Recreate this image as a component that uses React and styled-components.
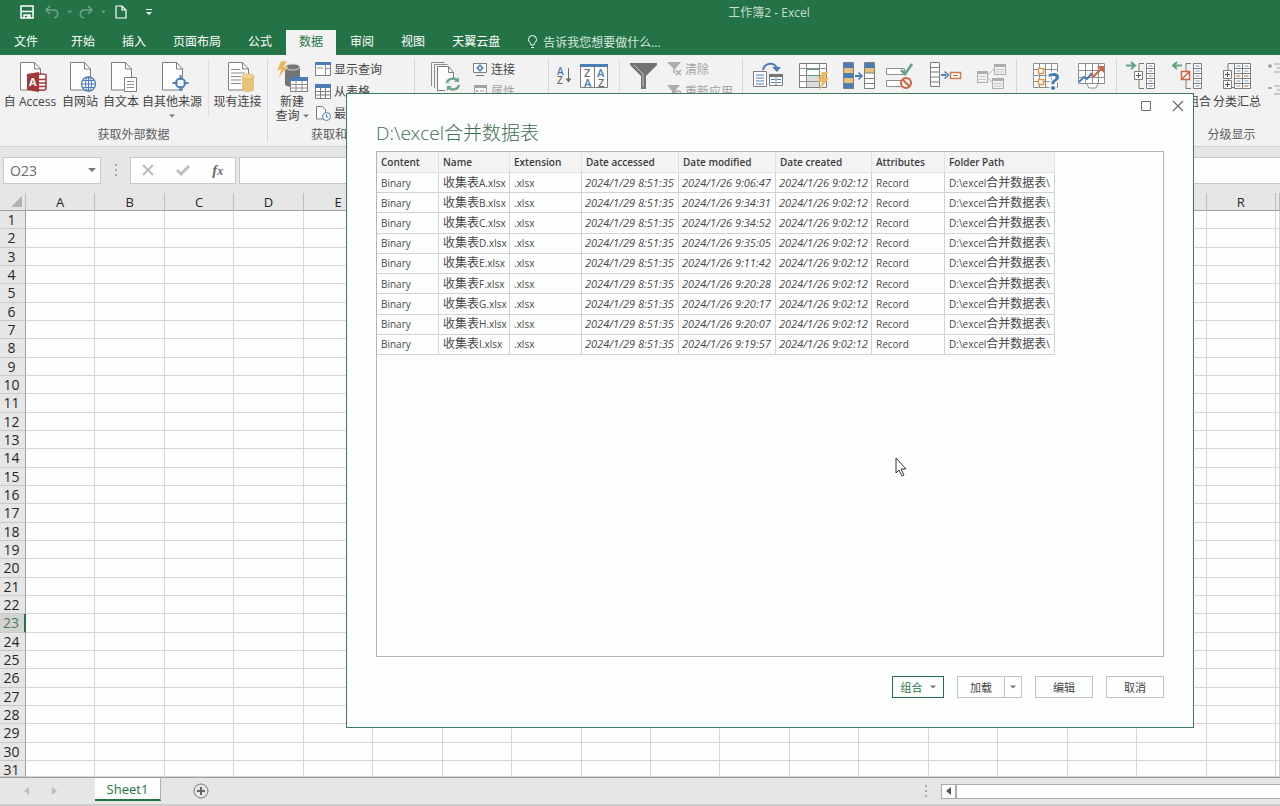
import React from 'react';
import styled, { createGlobalStyle } from 'styled-components';

const green = '#247346';
const uiFont = '"Open Sans", "Noto Sans", "Noto Sans CJK SC", sans-serif';

const GlobalStyle = createGlobalStyle`
  * {
    box-sizing: border-box;
  }

  body {
    margin: 0;
    font-family: ${uiFont};
    font-size: 12px;
    color: #444444;
    overflow: hidden;
  }

  button, input {
    margin: 0;
    padding: 0;
    border: 0;
    background: none;
    font: inherit;
    color: inherit;
  }
`;

const Window = styled.div`
  position: relative;
  display: flex;
  flex-direction: column;
  height: 100vh;
  overflow: hidden;
  background: #e6e6e6;
`;

/* title bar and tabs */

const Header = styled.header`
  flex-shrink: 0;
  background: ${green};
  color: #ffffff;
`;

const TitleBar = styled.div`
  display: flex;
  align-items: center;
  height: 24px;
  margin-bottom: 6px;
`;

const QuickAccess = styled.div`
  display: flex;
  align-items: center;
  width: 258px;
  height: 22px;
  padding-left: 16px;
`;

const QuickButton = styled.button`
  display: flex;
  align-items: center;
  justify-content: center;
  width: ${(props) => props.$width}px;
  height: 22px;
  opacity: ${(props) => (props.$dim ? 0.35 : 1)};
`;

const WindowTitle = styled.div`
  flex: 1;
  text-align: center;
  color: #c9ddd0;
`;

const Tabs = styled.nav`
  display: flex;
  gap: 1px;
  height: 25px;
  padding-left: 1px;
`;

const Tab = styled.button`
  padding: 0 13px 3px;
  white-space: nowrap;
  margin-right: ${(props) => (props.$file ? 6 : 0)}px;
  background: ${(props) => (props.$active ? '#f2f2f2' : 'transparent')};
  color: ${(props) => (props.$active ? green : '#ffffff')};
`;

const TellMe = styled.button`
  display: flex;
  align-items: center;
  gap: 5px;
  margin-left: 13px;
  padding-bottom: 2px;
  white-space: nowrap;
  color: #d9e8df;
`;

/* ribbon */

const Ribbon = styled.section`
  display: flex;
  flex-shrink: 0;
  height: 92px;
  overflow: hidden;
  background: #f2f2f2;
  border-bottom: 1px solid #d2d2d2;
`;

const Group = styled.div`
  display: flex;
  flex-direction: column;
  flex-shrink: 0;
  width: ${(props) => props.$width}px;
  margin: 4px 0;
  border-right: 1px solid #d6d6d6;
`;

const GroupBody = styled.div`
  display: flex;
  height: 70px;
  padding-left: ${(props) => props.$left || 0}px;
`;

const GroupName = styled.div`
  line-height: 14px;
  text-align: center;
  color: #5c5c5c;
`;

const BigButton = styled.button`
  display: flex;
  flex-direction: column;
  align-items: center;
  flex-shrink: 0;
  width: ${(props) => props.$width}px;
  padding-top: 2px;
  line-height: 14px;
  white-space: nowrap;

  > svg {
    flex-shrink: 0;
    margin-bottom: 2px;
    overflow: visible;
  }
`;

const LabelLine = styled.span`
  display: flex;
  align-items: center;
  gap: 3px;
  height: 14px;
`;

const SmallColumn = styled.div`
  display: flex;
  flex-direction: column;
  margin-top: -1px;
  margin-left: ${(props) => props.$left}px;
`;

const SmallButton = styled.button`
  display: flex;
  align-items: center;
  gap: 3px;
  height: 22px;
  white-space: nowrap;
  color: ${(props) => (props.$off ? '#a3a3a3' : '#444444')};
`;

const Separator = styled.div`
  width: 1px;
  height: 58px;
  margin: 0 ${(props) => props.$right}px 0 ${(props) => props.$left}px;
  background: #dddddd;
`;

/* formula bar */

const FormulaBar = styled.div`
  display: flex;
  align-items: center;
  flex-shrink: 0;
  height: 46px;
  padding-left: 3px;
`;

const NameBox = styled.div`
  display: flex;
  align-items: center;
  width: 98px;
  height: 27px;
  padding: 0 4px 0 6px;
  background: #fdfefd;
  border: 1px solid #c8c8c8;

  input {
    flex: 1;
    min-width: 0;
    font-size: 14px;
    color: #6a6a6a;
  }

  button {
    display: flex;
  }
`;

const FormulaTools = styled.div`
  display: flex;
  align-items: center;
  justify-content: space-around;
  width: 106px;
  height: 27px;
  margin-right: 3px;
  background: #fdfefd;
  border: 1px solid #c8c8c8;
`;

const ToolButton = styled.button`
  display: flex;
  align-items: center;
  justify-content: center;
  width: 32px;
`;

const FxLabel = styled.i`
  font-family: "Liberation Serif", serif;
  font-size: 15px;
  font-weight: bold;
  line-height: 18px;
  color: #6a6a6a;

  small {
    font-size: 12px;
  }
`;

const FormulaInput = styled.input`
  flex: 1;
  min-width: 0;
  height: 27px;
  padding: 0 6px;
  background: #fdfefd;
  border: 1px solid #c8c8c8;
  border-right: 0;
`;

const Dots = styled.span`
  display: flex;
  flex-direction: column;
  align-items: center;
  gap: 3px;
  width: ${(props) => props.$width}px;

  i {
    width: 2px;
    height: 2px;
    background: #a9a9a9;
  }
`;

/* worksheet */

const Sheet = styled.table`
  display: grid;
  flex: 1;
  min-height: 0;
  grid-template-columns: 26px repeat(18, 139fr) 8fr;
  grid-template-rows: 18px repeat(30, 55fr) 48fr;
  background: #fdfefd;
  overflow: hidden;

  thead, tbody, tr {
    display: contents;
  }
`;

const ColumnHead = styled.th`
  padding: 0;
  overflow: hidden;
  font-size: 13px;
  font-weight: 400;
  line-height: 18px;
  color: #262626;
  background: #e6e6e6;
  border-right: 1px solid #bdbdbd;
  border-bottom: 1px solid #9e9e9e;
`;

const Corner = styled(ColumnHead)`
  display: flex;
  align-items: flex-end;
  justify-content: flex-end;
  padding: 0 3px 3px 0;
`;

const RowHead = styled.th`
  padding: 1px 2px 0 0;
  min-height: 0;
  font-size: 14px;
  font-weight: 400;
  line-height: 16px;
  color: ${(props) => (props.$active ? '#4b7a61' : '#262626')};
  background: ${(props) => (props.$active ? '#d2d4d2' : '#e6e6e6')};
  border-right: ${(props) => (props.$active ? `2px solid ${green}` : '1px solid #9e9e9e')};
  border-bottom: 1px solid #c9c9c9;
`;

const Cell = styled.td`
  padding: 0;
  border-right: 1px solid #d5d6d5;
  border-bottom: 1px solid #d5d6d5;
`;

const SheetBar = styled.footer`
  display: flex;
  align-items: center;
  flex-shrink: 0;
  height: 29px;
  border-top: 1px solid #9e9e9e;
  border-bottom: 2px solid #cfcbcb;
`;

const SheetNav = styled.div`
  display: flex;
  align-items: center;
  width: 95px;
  padding-left: 12px;
`;

const NavButton = styled.button`
  display: flex;
  justify-content: center;
  width: 28px;
`;

const SheetTab = styled.button`
  align-self: flex-start;
  width: 66px;
  height: 23px;
  font-size: 13px;
  color: ${green};
  background: #fdfefd;
  border-right: 1px solid #b0b0b0;
  border-bottom: 2px solid ${green};
`;

const AddSheet = styled.button`
  display: flex;
  margin: 0 auto 0 32px;
`;

const ScrollTrack = styled.div`
  display: flex;
  width: 339px;
  height: 15px;
  background: #fdfefd;
  border: 1px solid #ababab;
  border-right: 0;

  button {
    display: flex;
    align-items: center;
    justify-content: center;
    width: 15px;
    border-right: 2px solid #ababab;
  }
`;

/* folder dialog */

const Dialog = styled.section`
  position: absolute;
  top: 93px;
  right: 86px;
  bottom: 78px;
  left: 346px;
  display: flex;
  flex-direction: column;
  background: #fdfefe;
  border: 1px solid #3f7a5b;
`;

const DialogControls = styled.div`
  display: flex;
  justify-content: flex-end;
  height: 24px;

  button {
    display: flex;
    align-items: center;
    justify-content: center;
    width: 31px;
  }
`;

const DialogTitle = styled.h1`
  margin: 0 29px 3px;
  font-size: 19px;
  font-weight: 300;
  line-height: 30px;
  color: #3d6e55;
`;

const Preview = styled.div`
  flex: 1;
  min-height: 0;
  margin: 0 29px;
  border: 1px solid #b4b4b4;
`;

const FileTable = styled.table`
  width: 678px;
  height: 203px;
  table-layout: fixed;
  border-collapse: separate;
  border-spacing: 0;
  font-size: 10px;
  line-height: 14px;
  white-space: nowrap;
`;

const FileHead = styled.th`
  width: ${(props) => props.$width}px;
  height: 21px;
  padding: 0 4px;
  text-align: left;
  font-weight: 600;
  color: #3c3c3c;
  background: #f3f3f3;
  border-right: 1px solid #e2e2e2;
  border-bottom: 1px solid #e2e2e2;
`;

const FileCell = styled.td`
  height: 20px;
  padding: 0 0 0 4px;
  color: #484848;
  border-right: 1px solid #d2d2d2;
  border-bottom: 1px solid #d2d2d2;
`;

const DateCell = styled(FileCell)`
  font-size: 11px;
  font-style: italic;
  padding-left: 3px;
`;

const Hanzi = styled.span`
  font-size: 12px;
`;

const DialogFooter = styled.div`
  display: flex;
  justify-content: flex-end;
  gap: 13px;
  padding: 19px 29px 29px;
`;

const DialogButton = styled.button`
  display: flex;
  align-items: center;
  justify-content: center;
  gap: 7px;
  width: ${(props) => props.$width}px;
  height: 22px;
  font-size: 11px;
  color: ${(props) => (props.$primary ? green : '#444444')};
  border: 1px solid ${(props) => (props.$primary ? green : '#c2c2c2')};
`;

const SplitButton = styled.div`
  display: flex;

  button + button {
    border-left: 0;
  }
`;

const Pointer = styled.svg`
  position: absolute;
  left: 895px;
  top: 457px;
`;

/* icons */

const Caret = ({ color = '#777777', size = 7 }) => (
  <svg width={size} height="4" viewBox="0 0 8 4" aria-hidden="true">
    <path d="M0 0h8L4 4z" fill={color} />
  </svg>
);

const Icon = ({ children, size = 32, height }) => (
  <svg width={size} height={height || size} viewBox={`0 0 ${size} ${height || size}`} fill="none" aria-hidden="true">
    {children}
  </svg>
);

const Page = () => (
  <>
    <path d="M6.500 1.500h14l6 6.500v21h-20z" fill="#fdfefd" stroke="#7d7d7d" />
    <path d="M20.500 1.500v6.500h6" stroke="#7d7d7d" />
  </>
);

const AccessIcon = () => (
  <Icon>
    <Page />
    <path d="M24 14c0-1.500 8-1.500 8 0v14c0 1.500-8 1.500-8 0z" fill="#fdfefd" stroke="#a4373a" strokeWidth="1.500" />
    <path d="M24 18.500h8M24 22h8M24 25.500h8" stroke="#a4373a" strokeWidth="1.500" />
    <path d="M13 13l12-2v20l-12-2z" fill="#a4373a" />
    <text x="15" y="25" fontSize="11" fontWeight="bold" fill="#ffffff">A</text>
  </Icon>
);

const WebIcon = () => (
  <Icon>
    <Page />
    <circle cx="24.500" cy="23" r="7" fill="#fdfefd" stroke="#4a7db5" strokeWidth="1.300" />
    <ellipse cx="24.500" cy="23" rx="3" ry="7" stroke="#4a7db5" />
    <path d="M17.500 23h14M19 19.500h11M19 26.500h11M24.500 16v14" stroke="#4a7db5" />
  </Icon>
);

const TextIcon = () => (
  <Icon>
    <Page />
    <path d="M19.500 16.500h12v14h-12z" fill="#fdfefd" stroke="#7d7d7d" />
    <path d="M22 20.500h7M22 23.500h7M22 26.500h7" stroke="#8d8d8d" />
  </Icon>
);

const SourceIcon = () => (
  <Icon>
    <Page />
    <circle cx="24.500" cy="22" r="4.500" fill="#fdfefd" stroke="#4a7db5" strokeWidth="2" />
    <path d="M24.500 14v5M24.500 25v5M16.500 22h5M27.500 22h5" stroke="#4a7db5" strokeWidth="2" />
  </Icon>
);

const ConnectionIcon = () => (
  <Icon>
    <Page />
    <path d="M9 8.500h9M9 12h14M9 15.500h10M9 19h10M9 22.500h10" stroke="#8d8d8d" />
    <path d="M20 15.500v13c0 3 12 3 12 0v-13z" fill="#e8c27a" />
    <ellipse cx="26" cy="15.500" rx="6" ry="2.500" fill="#f1d49b" stroke="#e3b968" />
  </Icon>
);

const NewQueryIcon = () => (
  <Icon>
    <path d="M9 6v17c0 4 15 4 15 0V6z" fill="#757575" />
    <ellipse cx="16.500" cy="6" rx="7.500" ry="3" fill="#757575" stroke="#d8d8d8" />
    <path d="M5 0h6L8 6h4L2 17l3-8H1z" fill="#e8b45c" stroke="#f2f2f2" strokeWidth="0.500" />
    <path d="M14.500 16.500h17v14h-17z" fill="#fdfefd" stroke="#7d7d7d" />
    <path d="M14 16h18v4H14z" fill="#4a7db5" />
    <path d="M14.500 23.500h17M14.500 27h17M20 20v10M26 20v10" stroke="#8d8d8d" />
  </Icon>
);

const Arrows = ({ x, y }) => (
  <g transform={`translate(${x} ${y})`} stroke="#6aa78b" strokeWidth="2.500">
    <path d="M1 6c1-5 8-6 11-2M13 8c-1 5-8 6-11 2" />
    <path d="M13 0v5H8zM1 14V9h5z" fill="#6aa78b" stroke="none" />
  </g>
);

const RefreshIcon = () => (
  <Icon>
    <path d="M1.500 25V1.500h13M4.500 27V3.500h13" stroke="#8d8d8d" />
    <path d="M7.500 5.500h11l5 6v18h-16z" fill="#fdfefd" stroke="#7d7d7d" />
    <path d="M18.500 5.500v6h5" stroke="#7d7d7d" />
    <path d="M15 17h16v14H15z" fill="#f2f2f2" />
    <Arrows x={16} y={16} />
  </Icon>
);

const SortAscIcon = () => (
  <Icon size={18} height={32}>
    <text x="2" y="14" fontSize="10" fontWeight="600" fill="#4a7db5">A</text>
    <text x="2" y="23" fontSize="10" fontWeight="600" fill="#6b6b6b">Z</text>
    <path d="M13.500 7v13" stroke="#6b6b6b" />
    <path d="M10.500 17.500h6l-3 4z" fill="#6b6b6b" />
  </Icon>
);

const SortIcon = () => (
  <Icon>
    <path d="M2.500 3.500h27v23h-27z" fill="#fdfefd" stroke="#7d7d7d" />
    <path d="M2 3h28v3H2z" fill="#4a7db5" />
    <path d="M16.500 6v20" stroke="#7d7d7d" />
    <g fontSize="11" fontWeight="600">
      <text x="6" y="16" fill="#6b6b6b">Z</text>
      <text x="6" y="26" fill="#4a7db5">A</text>
      <text x="19" y="16" fill="#4a7db5">A</text>
      <text x="20" y="26" fill="#6b6b6b">Z</text>
    </g>
  </Icon>
);

const FilterIcon = () => (
  <Icon>
    <path d="M3 2h27v2L19 15v13h-5V15L3 4z" fill="#737373" />
    <path d="M7 4l9 9v13" stroke="#c4c4c4" />
  </Icon>
);

const SplitTextIcon = () => (
  <Icon>
    <path d="M11 9C13 1 22 1 25 7" stroke="#4a7db5" strokeWidth="2" />
    <path d="M20 6h9l-4 5z" fill="#4a7db5" />
    <path d="M1.500 10.500h13v15h-13z" fill="#fdfefd" stroke="#7d7d7d" />
    <path d="M4 14h8M4 17h8M4 20h8M4 23h8" stroke="#4a7db5" />
    <path d="M17.500 13.500h13v11h-13z" fill="#fdfefd" stroke="#7d7d7d" />
    <path d="M17 13h14v3H17z" fill="#757575" />
    <path d="M19 18.500h4M19 21.500h4M25 18.500h4M25 21.500h4" stroke="#4a7db5" />
    <path d="M24 16v9" stroke="#7d7d7d" />
  </Icon>
);

const FlashFillIcon = () => (
  <Icon>
    <path d="M2.500 2.500h27v24h-27z" fill="#fdfefd" stroke="#7d7d7d" />
    <path d="M10 15h12v11H10z" fill="#dcdcdc" />
    <path d="M2.500 7.500h27M2.500 14.500h27M2.500 20.500h27M9.500 2.500v24M22.500 2.500v24" stroke="#8d8d8d" />
    <path d="M9.500 8.500h13v6h-13z" fill="#fdfefd" stroke="#5c9c7c" />
    <path d="M25 11h6l-3 6h4L22 30l3-9h-4z" fill="#e8b95f" />
  </Icon>
);

const DuplicatesIcon = () => (
  <Icon>
    <path d="M1 2h10v26H1zM21 2h10v26H21z" fill="#fdfefd" />
    <path d="M1 2h10v5H1zM1 12h10v5H1zM21 2h10v5H21z" fill="#4a7db5" />
    <path d="M1 7h10v5H1zM1 17h10v5H1zM21 7h10v5H21z" fill="#e8c27a" />
    <path d="M1 22h10v6H1z" fill="#4a7db5" />
    <path d="M.5 1.500h10v26H.5zM21.500 1.500h10v26h-10zM21.500 17.500h10M21.500 22.500h10M21.500 12h10" stroke="#7d7d7d" />
    <path d="M12 15h6" stroke="#4a7db5" strokeWidth="2" />
    <path d="M15.500 11.500l3.500 3.500-3.500 3.500" stroke="#4a7db5" strokeWidth="1.500" />
  </Icon>
);

const ValidationIcon = () => (
  <Icon>
    <path d="M2.500 7.500h18v6h-18zM2.500 19.500h18v6h-18z" fill="#fdfefd" stroke="#8d8d8d" />
    <path d="M17 9l4 4 7-10" stroke="#5fa583" strokeWidth="2.500" />
    <circle cx="22" cy="22" r="5" fill="#f2f2f2" stroke="#cf6440" strokeWidth="2" />
    <path d="M18.500 18.500l7 7" stroke="#cf6440" strokeWidth="2" />
  </Icon>
);

const ConsolidateIcon = () => (
  <Icon>
    <path d="M1.500 1.500h9v24h-9zM1.500 6.500h9M1.500 11h9M1.500 16h9M1.500 21h9" fill="#fdfefd" stroke="#7d7d7d" />
    <path d="M12 14h5" stroke="#4a7db5" strokeWidth="2" />
    <path d="M15.500 10.500l4 3.500-4 3.500" stroke="#4a7db5" strokeWidth="1.500" />
    <path d="M21.500 11.500h10v6h-10z" fill="#fdfefd" stroke="#d17a50" strokeWidth="1.500" />
    <path d="M24 14.500h5" stroke="#d17a50" />
  </Icon>
);

const RelationIcon = () => (
  <Icon>
    <path d="M12 14L19 7M12 17l6 6" stroke="#b5b5b5" />
    <path d="M1.500 10.500h10v11h-10zM18.500 3.500h11v10h-11zM16.500 17.500h11v10h-11z" fill="#f2f2f2" stroke="#adadad" />
    <path d="M1 10h11v3H1zM18 3h12v3H18zM16 17h12v3H16z" fill="#adadad" />
    <path d="M3 15.500h7M3 18.500h7M20 8.500h8M20 11h8M18 22.500h8M18 25h8" stroke="#c8c8c8" />
  </Icon>
);

const WhatIfIcon = () => (
  <Icon>
    <path d="M3.500 2.500h24v24h-24zM3.500 8.500h24M3.500 14.500h24M3.500 20.500h24M9.500 2.500v24M15.500 2.500v24M21.500 2.500v24" fill="#fdfefd" stroke="#8d8d8d" />
    <path d="M8.500 7.500h5v5h-5zM8.500 18.500h5v5h-5z" fill="#fdfefd" stroke="#dc9a54" strokeWidth="1.500" />
    <text x="18" y="29" fontSize="24" fontWeight="bold" fill="#4a7db5" stroke="#fdfefd" strokeWidth="3" paintOrder="stroke">?</text>
  </Icon>
);

const ForecastIcon = () => (
  <Icon>
    <path d="M2.500 2.500h26v20h-26zM2.500 9.500h26M2.500 16.500h26M9.500 2.500v20M16.500 2.500v20M22.500 2.500v20" fill="#fdfefd" stroke="#8d8d8d" />
    <path d="M11 23l2 4h7l2-4" fill="#fdfefd" stroke="#8d8d8d" />
    <path d="M3 21l5-5 3 2 5-6" stroke="#4a7db5" strokeWidth="2" />
    <path d="M15 14l3 1 8-8" stroke="#cf6440" strokeWidth="2" />
    <path d="M21 5h7v7z" fill="#cf6440" />
  </Icon>
);

const OutlineRows = ({ x }) => (
  <>
    <path d={`M${x} 2.500h8v25h-8zM${x} 7.500h8M${x} 12.500h8M${x} 17.500h8M${x} 22.500h8`} fill="#fdfefd" stroke="#7d7d7d" />
    <path d={`M${x + 2} 5h4M${x + 2} 10h4M${x + 2} 15h4M${x + 2} 20h4M${x + 2} 25h4`} stroke="#7d9cc0" />
  </>
);

const GroupIcon = () => (
  <Icon>
    <OutlineRows x={22.5} />
    <path d="M20 2.500h-5v25h5" stroke="#7d7d7d" />
    <path d="M10.500 10.500h8v8h-8z" fill="#fdfefd" stroke="#7d7d7d" />
    <path d="M12 14.500h5M14.500 12v5" stroke="#555555" />
    <path d="M2 4.500h8M7 1l4 3.500L7 8" stroke="#5fa583" strokeWidth="2" />
  </Icon>
);

const UngroupIcon = () => (
  <Icon>
    <OutlineRows x={22.5} />
    <path d="M20 2.500h-5v25h5" stroke="#7d7d7d" />
    <path d="M10.500 10.500h8v8h-8zM10.500 18.500l8-8" fill="#fdfefd" stroke="#cf6440" strokeWidth="1.500" />
    <path d="M3 4.500h8M6 1L2 4.500 6 8" stroke="#5fa583" strokeWidth="2" />
  </Icon>
);

const SubtotalIcon = () => (
  <Icon>
    <OutlineRows x={13.5} />
    <OutlineRows x={21.5} />
    <path d="M13 2.500H7v24h6" stroke="#7d7d7d" />
    <path d="M2.500 9.500h8v8h-8zM2.500 19.500h8v8h-8z" fill="#fdfefd" stroke="#7d7d7d" />
    <path d="M4 13.500h5M6.500 11v5M4 23.500h5M6.500 21v5" stroke="#555555" />
    <path d="M15 15h4M23 15h4M23 25h4" stroke="#dc9a54" />
  </Icon>
);

const PaneIcon = () => (
  <Icon size={16}>
    <path d="M.5 1.500h15v13H.5z" fill="#fdfefd" stroke="#7d7d7d" />
    <path d="M0 1h16v3H0z" fill="#4a7db5" />
    <path d="M10.500 4v10M10.500 7.500h5M2 7h6" stroke="#8d8d8d" />
  </Icon>
);

const FromTableIcon = () => (
  <Icon size={16}>
    <path d="M.5 1.500h15v14H.5zM.5 8.500h15M.5 12h15M5.500 4v11M10.500 4v11" fill="#fdfefd" stroke="#7d7d7d" />
    <path d="M0 1h16v4H0z" fill="#4a7db5" />
  </Icon>
);

const RecentIcon = () => (
  <Icon size={16}>
    <path d="M1.500 1.500h6l3 3.500v9h-9z" fill="#fdfefd" stroke="#7d7d7d" />
    <circle cx="11.500" cy="11.500" r="4" fill="#fdfefd" stroke="#4a7db5" />
    <path d="M11.500 9v3h2" stroke="#4a7db5" />
  </Icon>
);

const LinkIcon = () => (
  <Icon size={16}>
    <path d="M1.500 2.500h13v9h-13zM4 14.500h8" fill="#fdfefd" stroke="#7d7d7d" />
    <circle cx="8" cy="7" r="2" stroke="#4a7db5" strokeWidth="1.500" />
    <path d="M8 3v2M8 9v2M4 7h2M10 7h2" stroke="#4a7db5" />
  </Icon>
);

const PropertiesIcon = () => (
  <Icon size={16}>
    <path d="M2.500 2.500h12v10h-12z" fill="#f8f8f8" stroke="#a3a3a3" />
    <path d="M2 2h13v3H2zM4 7h2v2H4z" fill="#a3a3a3" />
    <path d="M8 8h4" stroke="#a3a3a3" />
  </Icon>
);

const ClearIcon = () => (
  <Icon size={16}>
    <path d="M1 1h14l-5 6v7L7 11V7z" fill="#adadad" />
    <path d="M9 8l6 6M15 8l-6 6" stroke="#f2f2f2" strokeWidth="3" />
    <path d="M10 9l5 5M15 9l-5 5" stroke="#adadad" strokeWidth="1.500" />
  </Icon>
);

const ReapplyIcon = () => (
  <Icon size={16}>
    <path d="M1 2h13l-5 6v5L6 11V8z" fill="#adadad" />
    <circle cx="12" cy="11" r="3" fill="#f2f2f2" stroke="#adadad" strokeWidth="1.500" />
  </Icon>
);

const DetailIcon = ({ minus }) => (
  <Icon size={16}>
    <path d="M7 3h9M10 7h6M7 11h9" stroke="#bdbdbd" strokeWidth="1.500" />
    <path d={minus ? 'M1 5h4' : 'M1 5h4M3 3v4'} stroke="#999999" strokeWidth="1.500" />
  </Icon>
);

const VerticalDots = ({ width }) => (
  <Dots $width={width}><i /><i /><i /></Dots>
);

/* data */

const tabs = ['文件', '开始', '插入', '页面布局', '公式', '数据', '审阅', '视图', '天翼云盘'];
const columns = 'ABCDEFGHIJKLMNOPQR'.split('');
const rows = Array.from({ length: 31 }, (_, i) => i + 1);

// headings F to Q lie behind the dialog
const isCovered = (name) => name > 'E' && name < 'R';

const fields = [
  ['Content', 62],
  ['Name', 71],
  ['Extension', 72],
  ['Date accessed', 97],
  ['Date modified', 97],
  ['Date created', 96],
  ['Attributes', 73],
  ['Folder Path', 110],
];

const files = [
  ['A', '9:06:47'],
  ['B', '9:34:31'],
  ['C', '9:34:52'],
  ['D', '9:35:05'],
  ['E', '9:11:42'],
  ['F', '9:20:28'],
  ['G', '9:20:17'],
  ['H', '9:20:07'],
  ['I', '9:19:57'],
];

const dataTools = [
  ['分列', 45, SplitTextIcon],
  ['快速填充', 46, FlashFillIcon],
  ['删除重复项', 46, DuplicatesIcon],
  ['数据验证', 36, ValidationIcon],
  ['合并计算', 54, ConsolidateIcon],
  ['关系', 40, RelationIcon],
];

const AppHeader = () => (
  <Header>
    <TitleBar>
      <QuickAccess>
        <QuickButton $width={22} aria-label="保存">
          <Icon size={14}>
            <path d="M1 1h12v12H1z" stroke="#ffffff" strokeWidth="1.500" />
            <path d="M1 6.500h12M4 13v-3h6v3" stroke="#ffffff" strokeWidth="1.500" />
            <path d="M7 10h2v3H7z" fill="#ffffff" />
          </Icon>
        </QuickButton>
        <QuickButton $width={28} $dim aria-label="撤消">
          <Icon size={14}>
            <path d="M5 1L1 5l4 4M1 5h7c6 0 6 7 1 8" stroke="#ffffff" strokeWidth="1.500" />
          </Icon>
        </QuickButton>
        <QuickButton $width={6} $dim aria-label="撤消选项"><Caret color="#ffffff" size={5} /></QuickButton>
        <QuickButton $width={28} $dim aria-label="重做">
          <Icon size={14}>
            <path d="M9 1l4 4-4 4M13 5H6C0 5 0 12 5 13" stroke="#ffffff" strokeWidth="1.500" />
          </Icon>
        </QuickButton>
        <QuickButton $width={6} $dim aria-label="重做选项"><Caret color="#ffffff" size={5} /></QuickButton>
        <QuickButton $width={30} aria-label="新建">
          <Icon size={14}>
            <path d="M2 1h6l4 4v8H2zM8 1v4h4" stroke="#ffffff" strokeWidth="1.200" />
          </Icon>
        </QuickButton>
        <QuickButton $width={26} aria-label="自定义快速访问工具栏">
          <Icon size={6} height={7}>
            <path d="M0 .5h6" stroke="#ffffff" />
            <path d="M0 3h6L3 6z" fill="#ffffff" />
          </Icon>
        </QuickButton>
      </QuickAccess>
      <WindowTitle>工作簿2 - Excel</WindowTitle>
    </TitleBar>
    <Tabs>
      {tabs.map((name) => (
        <Tab key={name} $file={name === '文件'} $active={name === '数据'}>{name}</Tab>
      ))}
      <TellMe>
        <Icon size={11} height={14}>
          <path d="M4 10C4 8 1.500 7 1.500 4.500a4 4 0 018 0C9.500 7 7 8 7 10zM4 12.500h3" stroke="#ffffff" />
        </Icon>
        告诉我您想要做什么...
      </TellMe>
    </Tabs>
  </Header>
);

const DataRibbon = () => (
  <Ribbon>
    <Group $width={268}>
      <GroupBody $left={2}>
        <BigButton $width={56}><AccessIcon />自 Access</BigButton>
        <BigButton $width={44}><WebIcon />自网站</BigButton>
        <BigButton $width={38}><TextIcon />自文本</BigButton>
        <BigButton $width={64}>
          <SourceIcon />
          自其他来源
          <LabelLine><Caret size={6} /></LabelLine>
        </BigButton>
        <Separator $left={4} $right={2} />
        <BigButton $width={53}><ConnectionIcon />现有连接</BigButton>
      </GroupBody>
      <GroupName>获取外部数据</GroupName>
    </Group>

    <Group $width={147}>
      <GroupBody $left={5}>
        <BigButton $width={38}>
          <NewQueryIcon />
          新建
          <LabelLine>查询<Caret size={6} /></LabelLine>
        </BigButton>
        <SmallColumn $left={4}>
          <SmallButton><PaneIcon />显示查询</SmallButton>
          <SmallButton><FromTableIcon />从表格</SmallButton>
          <SmallButton><RecentIcon />最近使用的源</SmallButton>
        </SmallColumn>
      </GroupBody>
      <GroupName>获取和转换</GroupName>
    </Group>

    <Group $width={134}>
      <GroupBody $left={11}>
        <BigButton $width={40} aria-label="全部刷新"><RefreshIcon /></BigButton>
        <SmallColumn $left={6}>
          <SmallButton><LinkIcon />连接</SmallButton>
          <SmallButton $off><PropertiesIcon />属性</SmallButton>
        </SmallColumn>
      </GroupBody>
    </Group>

    <Group $width={194}>
      <GroupBody $left={6}>
        <BigButton $width={18} aria-label="升序"><SortAscIcon /></BigButton>
        <BigButton $width={42} aria-label="排序"><SortIcon /></BigButton>
        <Separator $left={4} $right={5} />
        <BigButton $width={36} aria-label="筛选"><FilterIcon /></BigButton>
        <SmallColumn $left={5}>
          <SmallButton $off><ClearIcon />清除</SmallButton>
          <SmallButton $off><ReapplyIcon />重新应用</SmallButton>
        </SmallColumn>
      </GroupBody>
    </Group>

    <Group $width={274}>
      <GroupBody $left={2}>
        {dataTools.map(([name, width, ToolIcon]) => (
          <BigButton key={name} $width={width} aria-label={name}><ToolIcon /></BigButton>
        ))}
      </GroupBody>
    </Group>

    <Group $width={100}>
      <GroupBody $left={6}>
        <BigButton $width={46} aria-label="模拟分析"><WhatIfIcon /></BigButton>
        <BigButton $width={46} aria-label="预测工作表"><ForecastIcon /></BigButton>
      </GroupBody>
    </Group>

    <Group $width={230}>
      <GroupBody>
        <BigButton $width={46} aria-label="创建组"><GroupIcon /></BigButton>
        <BigButton $width={48}><UngroupIcon />取消组合</BigButton>
        <BigButton $width={52}><SubtotalIcon />分类汇总</BigButton>
        <SmallColumn $left={4}>
          <SmallButton $off aria-label="显示明细数据"><DetailIcon /></SmallButton>
          <SmallButton $off aria-label="隐藏明细数据"><DetailIcon minus /></SmallButton>
        </SmallColumn>
      </GroupBody>
      <GroupName>分级显示</GroupName>
    </Group>
  </Ribbon>
);

const FormulaRow = () => (
  <FormulaBar>
    <NameBox>
      <input aria-label="名称框" defaultValue="O23" />
      <button aria-label="名称列表"><Caret size={8} /></button>
    </NameBox>
    <VerticalDots width={29} />
    <FormulaTools>
      <ToolButton aria-label="取消输入">
        <Icon size={12}><path d="M1 1l10 10M11 1L1 11" stroke="#bcbcbc" strokeWidth="2" /></Icon>
      </ToolButton>
      <ToolButton aria-label="输入">
        <Icon size={14} height={12}><path d="M1 6l4 4 8-8" stroke="#bcbcbc" strokeWidth="3" /></Icon>
      </ToolButton>
      <ToolButton aria-label="插入函数"><FxLabel>f<small>x</small></FxLabel></ToolButton>
    </FormulaTools>
    <FormulaInput aria-label="编辑栏" />
  </FormulaBar>
);

const Worksheet = () => (
  <Sheet>
    <thead>
      <tr>
        <Corner aria-label="全选">
          <Icon size={11}><path d="M11 0v11H0z" fill="#b2b2b2" /></Icon>
        </Corner>
        {columns.map((name) => (
          <ColumnHead key={name} aria-label={name}>{isCovered(name) ? null : name}</ColumnHead>
        ))}
        <ColumnHead />
      </tr>
    </thead>
    <tbody>
      {rows.map((row) => (
        <tr key={row}>
          <RowHead $active={row === 23}>{row}</RowHead>
          {columns.map((name) => <Cell key={name} />)}
          <Cell />
        </tr>
      ))}
    </tbody>
  </Sheet>
);

const FolderDialog = () => (
  <Dialog role="dialog" aria-labelledby="folder-title">
    <DialogControls>
      <button aria-label="最大化">
        <Icon size={11}><path d="M.5 .5h9v9h-9z" stroke="#6f6f6f" /></Icon>
      </button>
      <button aria-label="关闭">
        <Icon size={12}><path d="M1 1l10 10M11 1L1 11" stroke="#6f6f6f" strokeWidth="1.300" /></Icon>
      </button>
    </DialogControls>
    <DialogTitle id="folder-title">D:\excel合并数据表</DialogTitle>
    <Preview>
      <FileTable>
        <thead>
          <tr>
            {fields.map(([name, width]) => <FileHead key={name} $width={width}>{name}</FileHead>)}
          </tr>
        </thead>
        <tbody>
          {files.map(([letter, modified]) => (
            <tr key={letter}>
              <FileCell>Binary</FileCell>
              <FileCell><Hanzi>收集表</Hanzi>{letter}.xlsx</FileCell>
              <FileCell>.xlsx</FileCell>
              <DateCell>2024/1/29 8:51:35</DateCell>
              <DateCell>2024/1/26 {modified}</DateCell>
              <DateCell>2024/1/26 9:02:12</DateCell>
              <FileCell>Record</FileCell>
              <FileCell>D:\excel<Hanzi>合并数据表</Hanzi>\</FileCell>
            </tr>
          ))}
        </tbody>
      </FileTable>
    </Preview>
    <DialogFooter>
      <DialogButton $width={52} $primary>组合<Caret size={6} /></DialogButton>
      <SplitButton>
        <DialogButton $width={48}>加载</DialogButton>
        <DialogButton $width={17} aria-label="加载选项"><Caret size={6} /></DialogButton>
      </SplitButton>
      <DialogButton $width={58}>编辑</DialogButton>
      <DialogButton $width={58}>取消</DialogButton>
    </DialogFooter>
  </Dialog>
);

const App = () => (
  <Window>
    <GlobalStyle />
    <AppHeader />
    <DataRibbon />
    <FormulaRow />
    <Worksheet />
    <SheetBar>
      <SheetNav>
        <NavButton aria-label="上一个工作表">
          <Icon size={5} height={8}><path d="M5 0v8L0 4z" fill="#bdbdbd" /></Icon>
        </NavButton>
        <NavButton aria-label="下一个工作表">
          <Icon size={5} height={8}><path d="M0 0v8l5-4z" fill="#bdbdbd" /></Icon>
        </NavButton>
      </SheetNav>
      <SheetTab>Sheet1</SheetTab>
      <AddSheet aria-label="新工作表">
        <Icon size={16}>
          <circle cx="8" cy="8" r="7" stroke="#7a7a7a" />
          <path d="M8 4v8M4 8h8" stroke="#666666" strokeWidth="2" />
        </Icon>
      </AddSheet>
      <VerticalDots width={30} />
      <ScrollTrack>
        <button aria-label="向左滚动">
          <Icon size={5} height={8}><path d="M5 0v8L0 4z" fill="#555555" /></Icon>
        </button>
      </ScrollTrack>
    </SheetBar>
    <FolderDialog />
    <Pointer width="12" height="20" viewBox="0 0 12 20" aria-hidden="true">
      <path d="M1 1v15l3-3 3 6 2-1-3-6h5z" fill="#ffffff" stroke="#333333" />
    </Pointer>
  </Window>
);

export default App;
